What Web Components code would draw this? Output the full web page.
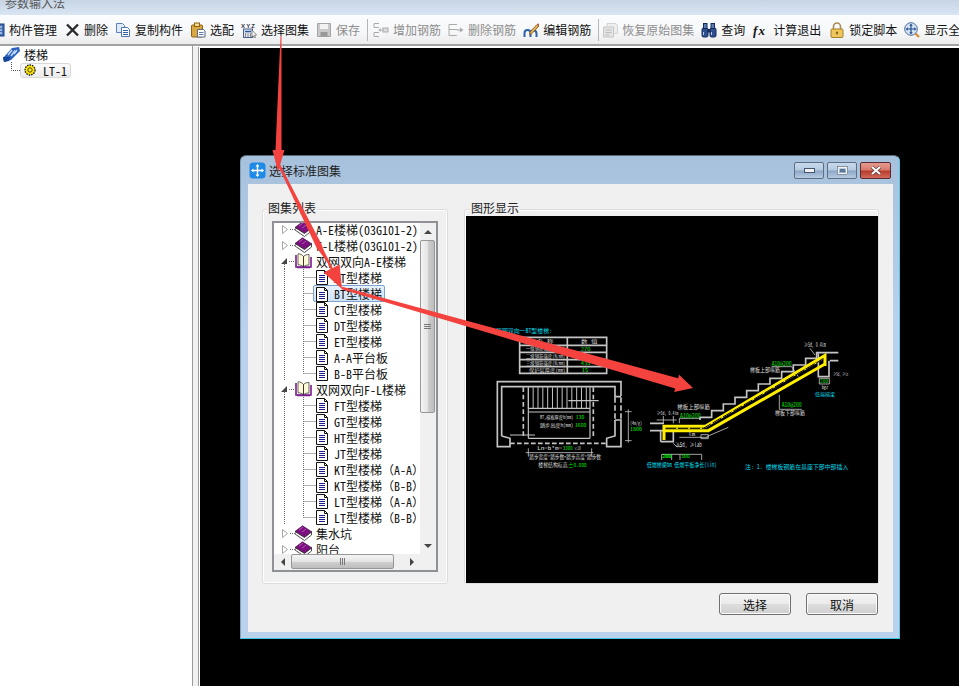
<!DOCTYPE html>
<html>
<head>
<meta charset="utf-8">
<style>
  html, body { margin: 0; height: 100%; overflow: hidden; }
  body {
    font: 12px "Noto Sans CJK SC", sans-serif;
    font-feature-settings: "hwid";
    color: #111;
  }
  .fw { font-feature-settings: normal; }
</style>
</head>
<body>
<param-app>
  <tool-bar slot="toolbar">
    <tool-item icon="manage">构件管理</tool-item>
    <tool-item icon="del">删除</tool-item>
    <tool-item icon="copy">复制构件</tool-item>
    <tool-item icon="match">选配</tool-item>
    <tool-item icon="atlas">选择图集</tool-item>
    <tool-item icon="save" disabled>保存</tool-item>
    <tool-sep></tool-sep>
    <tool-item icon="addbar" disabled>增加钢筋</tool-item>
    <tool-item icon="delbar" disabled>删除钢筋</tool-item>
    <tool-item icon="editbar">编辑钢筋</tool-item>
    <tool-sep style="margin-right:-4px"></tool-sep>
    <tool-item icon="restore" disabled>恢复原始图集</tool-item>
    <tool-item icon="query">查询</tool-item>
    <tool-item icon="fx" style="margin-left:1px">计算退出</tool-item>
    <tool-item icon="lock" style="margin-left:1px">锁定脚本</tool-item>
    <tool-item icon="zoomall">显示全</tool-item>
  </tool-bar>
  <side-tree slot="side"></side-tree>

  <atlas-dialog slot="dialog" heading="选择标准图集">
    <group-box slot="left" label="图集列表" style="--pad:11px 9px 9px 9px;--w:186px;--lx:4px">
      <tree-view>
        <tree-row kind="closed">A-E楼梯(03G101-2)</tree-row>
        <tree-row kind="closed">F-L楼梯(03G101-2)</tree-row>
        <tree-row kind="open">双网双向A-E楼梯</tree-row>
        <tree-row kind="doc">AT型楼梯</tree-row>
        <tree-row kind="doc" selected>BT型楼梯</tree-row>
        <tree-row kind="doc">CT型楼梯</tree-row>
        <tree-row kind="doc">DT型楼梯</tree-row>
        <tree-row kind="doc">ET型楼梯</tree-row>
        <tree-row kind="doc">A-A平台板</tree-row>
        <tree-row kind="doc" last>B-B平台板</tree-row>
        <tree-row kind="open">双网双向F-L楼梯</tree-row>
        <tree-row kind="doc">FT型楼梯</tree-row>
        <tree-row kind="doc">GT型楼梯</tree-row>
        <tree-row kind="doc">HT型楼梯</tree-row>
        <tree-row kind="doc">JT型楼梯</tree-row>
        <tree-row kind="doc">KT型楼梯<span class="fw">（</span>A-A<span class="fw">）</span></tree-row>
        <tree-row kind="doc">KT型楼梯<span class="fw">（</span>B-B<span class="fw">）</span></tree-row>
        <tree-row kind="doc">LT型楼梯<span class="fw">（</span>A-A<span class="fw">）</span></tree-row>
        <tree-row kind="doc" last>LT型楼梯<span class="fw">（</span>B-B<span class="fw">）</span></tree-row>
        <tree-row kind="closed">集水坑</tree-row>
        <tree-row kind="closed">阳台</tree-row>
      </tree-view>
    </group-box>
    <group-box slot="right" label="图形显示" style="--pad:6px 0 0 1px;--w:415px;--lx:5px">
      <cad-drawing></cad-drawing>
    </group-box>
    <win-button slot="buttons">选择</win-button>
    <win-button slot="buttons">取消</win-button>
  </atlas-dialog>
  <red-arrows slot="overlay"></red-arrows>
</param-app>

<script>
// 툴바 아이콘
const ICONS = {
  manage: `<rect x="2" y="2" width="13" height="12" fill="#3f6fb5" stroke="#1d3f7a"/><path d="M4 5h9M4 8h9M4 11h9" stroke="#fff"/>`,
  del: `<path d="M3 2.500 L14 13.500 M14 2.500 L3 13.500" stroke="#2a2a2a" stroke-width="2.400"/>`,
  copy: `<path d="M1.500 1.500h6l2 2v7h-8z" fill="#dfeafa" stroke="#5c7fb5"/><path d="M6.500 5.500h6l2 2v7h-8z" fill="#fff" stroke="#4f74ad"/><path d="M8 8.500h5M8 10.500h5M8 12.500h5" stroke="#2f5fa5"/>`,
  match: `<rect x="1.500" y="3" width="11" height="12" rx="1" fill="#d9a83e" stroke="#8a6414"/><rect x="4.500" y="1" width="5" height="3.500" fill="#f3dc8d" stroke="#8a6414"/><path d="M7.500 7.500h6l1.500 1.500v6h-7.500z" fill="#fff" stroke="#5a6a85"/><path d="M9 10.500h4.500M9 12.500h4.500" stroke="#5a7ab0"/>`,
  atlas: `<text x="0" y="5.500" font-size="6" font-family="Liberation Sans" font-weight="bold" fill="#334" textLength="14">XYZ</text><rect x="2.500" y="7" width="9" height="8.500" fill="#dfe6f2" stroke="#4a5f88"/><path d="M4 9.500h6" stroke="#2c5aa0" stroke-width="1.500"/><path d="M4 12h1M6.500 12h1M9 12h1M4 14h1M6.500 14h1M9 14h1" stroke="#333"/><path d="M11 8l4.500 5-2 .3 1 2.200-1.200.4-1-2.200-1.300 1.300z" fill="#fff" stroke="#555" stroke-width=".7"/>`,
  save: `<path d="M1.500 1.500h13v13h-13z" fill="#c9c9c9" stroke="#a5a5a5"/><rect x="4" y="2" width="8" height="5" fill="#f2f2f2"/><rect x="4.500" y="10" width="7" height="4.500" fill="#989898"/>`,
  addbar: `<path d="M1 1.500h5M1 1.500v4M1 5.500h5M1 10.500h5M1 10.500v4M1 14.500h5" stroke="#aaa" fill="none"/><path d="M6 8h4" stroke="#aaa"/><rect x="10" y="6" width="5" height="4" fill="#ddd" stroke="#aaa"/><path d="M8 6l-3 2 3 2" fill="#bbb"/>`,
  delbar: `<path d="M1 2.500h8M1 2.500v11M1 7.500h8M1 13.500h8" stroke="#aaa" fill="none"/><path d="M9 8h5" stroke="#999"/><path d="M12 5.500l3.500 2.500-3.500 2.500" fill="#aaa"/>`,
  editbar: `<path d="M1.500 15v-4a3 3 0 0 1 6 0v4M7.500 15v-3.500a3 3 0 0 1 6 0V15" fill="none" stroke="#2f62ad" stroke-width="2"/><path d="M7 10L14 2.500l2 1.500-7 7.500-2.500 1z" fill="#e8b04a" stroke="#7a5320" stroke-width=".8"/><path d="M14 2.500l2 1.500 .8-1-2-1.700z" fill="#d0453a"/>`,
  restore: `<path d="M5 1.500h9l1.500 2v8H5z" fill="#eee" stroke="#d2d2d2"/><path d="M1.500 5h10v10h-10z" fill="#e4e4e4" stroke="#c6c6c6"/><path d="M3.500 8h6M3.500 10.500h6M3.500 13h4" stroke="#bdbdbd"/>`,
  query: `<rect x="1" y="6" width="6" height="9" rx="1.500" fill="#2f4f8f" stroke="#142c5c"/><rect x="9" y="6" width="6" height="9" rx="1.500" fill="#2f4f8f" stroke="#142c5c"/><rect x="2.500" y="1.500" width="3.500" height="5" fill="#5c7ab5" stroke="#142c5c"/><rect x="10" y="1.500" width="3.500" height="5" fill="#5c7ab5" stroke="#142c5c"/><rect x="6.500" y="7" width="3" height="3.500" fill="#142c5c"/><path d="M2.500 10v3M10.500 10v3" stroke="#b9c9e8"/>`,
  fx: `<text x="0" y="13" font-size="13" font-family="Liberation Serif" font-style="italic" font-weight="bold" fill="#111" textLength="12">fx</text>`,
  lock: `<path d="M4.500 7V4.500a3.500 3.500 0 0 1 7 0V7" fill="none" stroke="#a98b52" stroke-width="1.600"/><rect x="2" y="7" width="12" height="8.500" rx="1" fill="#f0c75a" stroke="#a5802c"/><path d="M8 9.500v3M6.800 11h2.400" stroke="#6b4f14"/>`,
  zoomall: `<circle cx="7" cy="7" r="6.300" fill="#d6e3f5" stroke="#4a6a9a"/><path d="M7 2.500v9M2.500 7h9" stroke="#24508f" stroke-width="1.200"/><path d="M7 1.800l-1.800 2h3.600zM7 12.200l-1.800-2h3.600zM1.800 7l2-1.800v3.600zM12.200 7l-2-1.800v3.600z" fill="#24508f"/><path d="M11.500 11.500l3.500 3.500" stroke="#d98a2a" stroke-width="2.200"/>`,
};

// 전체 창: 제목, 툴바, 왼쪽 트리, 검은 캔버스
class ParamApp extends HTMLElement {
  constructor() {
    super();
    this.attachShadow({ mode: 'open' }).innerHTML = `
<style>
  :host { display: grid; position: relative; width: 959px; height: 686px; overflow: hidden;
    grid-template-rows: 15px 32px 1fr; background: #f0f0f0; }
  .title { background: linear-gradient(#c6d4e4, #d9e5f3); padding-left: 5px; line-height: 6px; color: #555; overflow: hidden; }
  .body { display: grid; grid-template-columns: 193px 1fr; min-height: 0; }
  .canvas { margin-left: 6px; background: #000; border: 1px solid #fff; border-width: 1px 0 0 1px; box-shadow: -1px 0 0 #9c9c9c; }
</style>
<div class="title">参数输入法</div>
<slot name="toolbar"></slot>
<div class="body">
  <slot name="side"></slot>
  <div class="canvas"></div>
</div>
<slot name="dialog"></slot>
<slot name="overlay"></slot>`;
  }
}

class ToolBar extends HTMLElement {
  constructor() {
    super();
    this.attachShadow({ mode: 'open' }).innerHTML = `
<style>
  :host { display: flex; align-items: center; gap: 7px; margin-bottom: 1px; overflow: hidden; height: 29px;
    background: linear-gradient(#fbfcfe, #f7f8fa 55%, #ececec); border-bottom: 2px solid #a2a2a2; box-shadow: 0 1px 0 #fff; }
  ::slotted(tool-item:first-child) { margin-left: -11px; }
</style>
<slot></slot>`;
  }
}

class ToolItem extends HTMLElement {
  constructor() {
    super();
    const icon = this.getAttribute('icon');
    this.attachShadow({ mode: 'open' }).innerHTML = `
<style>
  :host { display: flex; flex: none; align-items: center; gap: 4px; color: #111; white-space: nowrap; }
  :host([disabled]) { color: #8d8d8d; }
  svg { width: 16px; height: 16px; flex: none; }
</style>
<svg viewBox="0 0 16 16">${ICONS[icon] || ''}</svg><slot></slot>`;
  }
}

class ToolSep extends HTMLElement {
  constructor() {
    super();
    this.attachShadow({ mode: 'open' }).innerHTML = `
<style>:host { display: block; flex: none; width: 1px; height: 22px; margin-right: -2px; background: #b5b5b5; }</style>`;
  }
}

// 왼쪽 구조 트리
class SideTree extends HTMLElement {
  constructor() {
    super();
    this.attachShadow({ mode: 'open' }).innerHTML = `
<style>
  :host { display: block; background: #fff; border-right: 1px solid #9a9a9a; padding-top: 0; margin-top: -1px; }
  .row { display: flex; align-items: center; height: 16px; }
  .row svg { flex: none; }
  .top { padding-left: 3px; gap: 4px; }
  .sub { position: relative; padding-left: 20px; }
  .sub svg.guide { position: absolute; left: 0; top: 0; }
  .chip { display: flex; align-items: center; gap: 7px; height: 15px; width: 51px; padding-left: 3px; box-sizing: border-box;
    border: 1px solid #d9d9d9; border-radius: 3px; background: linear-gradient(#fafafa, #ececec); }
</style>
<div class="row top">
  <svg width="17" height="16" viewBox="0 0 17 16">
    <path d="M0 12 L9 2 L16 1 L17 5 L8 14 L1 16z" fill="#2a62bd"/>
    <path d="M5 9l4-5M8 10l4-5.500M11 8l3-4" stroke="#bcd6f8" stroke-width="1.600"/>
    <path d="M0 11h7l-1 4-5 1z" fill="#17479a"/>
  </svg>
  <span>楼梯</span>
</div>
<div class="row sub">
  <svg class="guide" width="20" height="16"><path d="M11.500 0v8.500H20" fill="none" stroke="#555" stroke-dasharray="1 1"/></svg>
  <div class="chip">
    <svg width="12" height="12" viewBox="0 0 12 12">
      <circle cx="6" cy="6" r="5" fill="#ffe800" stroke="#111" stroke-width="1.300" stroke-dasharray="1.500 1"/>
      <circle cx="6" cy="6" r="2.200" fill="#fff200" stroke="#4a3d00"/>
    </svg>
    <span>LT-1</span>
  </div>
</div>`;
  }
}

// 떠 있는 대화상자
class AtlasDialog extends HTMLElement {
  constructor() {
    super();
    const heading = this.getAttribute('heading');
    this.attachShadow({ mode: 'open' }).innerHTML = `
<style>
  :host { position: absolute; left: 240px; top: 155px; width: 660px; height: 484px; box-sizing: border-box;
    display: flex; flex-direction: column; padding: 0 6px 6px 7px; border-radius: 6px 6px 0 0;
    background: linear-gradient(#a7c1dc, #b9d1ea 35%); border: 1px solid #5d6b78; border-color: #5d6b78 #58c6e6 #3fc4e2 #7fa0bf; }
  .bar { display: flex; align-items: center; height: 28px; flex: none; }
  .app { width: 17px; height: 17px; margin-left: 1px; flex: none; }
  .cap { margin-left: 3px; color: #222; flex: 1; }
  .caps { display: flex; gap: 3px; margin-right: 2px; }
  .cap-btn { width: 30px; height: 17px; box-sizing: border-box; border: 1px solid #5e6f85; border-radius: 2px;
    display: flex; align-items: center; justify-content: center;
    background: linear-gradient(#c8d9ec, #b4c9e0 48%, #8aa6c6 52%, #b5cbe2); }
  .cap-btn.close { width: 31px; background: linear-gradient(#e49a90, #d97a6c 48%, #b8392a 52%, #d0695a); border-color: #5a2a30; }
  .content { flex: 1; background: #f0f0f0; display: flex; flex-direction: column; padding: 25px 13px 0 14px; min-height: 0; }
  .groups { display: flex; gap: 16px; height: 375px; flex: none; }
  .buttons { display: flex; justify-content: flex-end; gap: 15px; margin-top: 9px; padding-right: 2px; }
</style>
<div class="bar">
  <svg class="app" viewBox="0 0 17 17">
    <rect x=".5" y=".5" width="16" height="16" rx="3.500" fill="#1c8ae6"/>
    <path d="M8.500 3v11M3 8.500h11" stroke="#fff" stroke-width="1.400"/>
    <path d="M8.500 2l-2 2.500h4zM8.500 15l-2-2.500h4zM2 8.500l2.500-2v4zM15 8.500l-2.500-2v4z" fill="#fff"/>
  </svg>
  <span class="cap">${heading}</span>
  <div class="caps">
    <div class="cap-btn"><svg width="11" height="5"><rect x=".5" y=".5" width="10" height="4" fill="#f2f2f2" stroke="#45566c"/></svg></div>
    <div class="cap-btn"><svg width="11" height="9"><rect x="1" y="1" width="9" height="7" fill="none" stroke="#f2f2f2" stroke-width="2"/><rect x=".5" y=".5" width="10" height="8" fill="none" stroke="#45566c" stroke-width=".6"/><rect x="3" y="3" width="5" height="3" fill="#5d7696"/></svg></div>
    <div class="cap-btn close"><svg width="12" height="9"><path d="M2 1l8 7M10 1l-8 7" stroke="#4a3a3a" stroke-width="3.200"/><path d="M2 1l8 7M10 1l-8 7" stroke="#fff" stroke-width="2"/></svg></div>
  </div>
</div>
<div class="content">
  <div class="groups"><slot name="left"></slot><slot name="right"></slot></div>
  <div class="buttons"><slot name="buttons"></slot></div>
</div>`;
  }
}

class GroupBox extends HTMLElement {
  constructor() {
    super();
    const label = this.getAttribute('label');
    this.attachShadow({ mode: 'open' }).innerHTML = `
<style>
  :host { display: block; position: relative; box-sizing: border-box; height: 375px; width: var(--w); padding: var(--pad);
    border: 1px solid #dcdcdc; border-radius: 3px; box-shadow: inset 0 0 0 1px #fff; }
  .legend { position: absolute; left: var(--lx); top: -10px; line-height: 16px; padding: 0 1px; background: #f0f0f0; color: #222; }
</style>
<span class="legend">${label}</span>
<slot></slot>`;
  }
}

class TreeView extends HTMLElement {
  constructor() {
    super();
    this.attachShadow({ mode: 'open' }).innerHTML = `
<style>
  :host { display: grid; grid-template-columns: 1fr 16px; grid-template-rows: 1fr 16px; height: 351px; box-sizing: border-box;
    border: 2px solid #8e9297; background: #fff; }
  .view { overflow: hidden; min-height: 0; }
  .rows { margin-top: -2px; }
  .corner { background: #f0f0f0; }
</style>
<div class="view"><div class="rows"><slot></slot></div></div>
<scroll-bar orient="v" size="173"></scroll-bar>
<scroll-bar orient="h" size="103"></scroll-bar>
<div class="corner"></div>`;
  }
}

class ScrollBar extends HTMLElement {
  constructor() {
    super();
    const v = this.getAttribute('orient') === 'v';
    const size = this.getAttribute('size');
    const arrows = v ? ['M1 7l4-4 4 4z', 'M1 3l4 4 4-4z'] : ['M7 1l-4 4 4 4z', 'M3 1l4 4-4 4z'];
    const grip = v ? 'M3 0h7M3 2h7M3 4h7' : 'M0 3v7M2 3v7M4 3v7';
    this.attachShadow({ mode: 'open' }).innerHTML = `
<style>
  :host { display: flex; flex-direction: ${v ? 'column' : 'row'}; background: #f0f0f0; justify-content: space-between; }
  .arrow { flex: none; width: ${v ? '100%' : '17px'}; height: ${v ? '17px' : '100%'}; display: flex; align-items: center; justify-content: center; }
  .thumb { flex: none; box-sizing: border-box; ${v ? `height:${size}px;width:15px` : `width:${size}px;height:15px`};
    border: 1px solid #979797; border-radius: 2px; display: flex; align-items: center; justify-content: center;
    background: linear-gradient(${v ? 'to right,' : ''} #f4f4f4, #e4e4e4 50%, #cfcfcf 52%, #bdbdbd); }
  .fill { flex: 1; }
</style>
<div class="arrow"><svg width="10" height="10"><path d="${arrows[0]}" fill="#444"/></svg></div>
<div class="thumb"><svg width="${v ? 13 : 5}" height="${v ? 5 : 13}"><path d="${grip}" stroke="#777" transform="translate(${v ? 0 : .5} ${v ? .5 : 0})"/></svg></div>
<div class="fill"></div>
<div class="arrow"><svg width="10" height="10"><path d="${arrows[1]}" fill="#444"/></svg></div>`;
  }
}

// 트리의 한 줄 (closed / open / doc)
class TreeRow extends HTMLElement {
  constructor() {
    super();
    const kind = this.getAttribute('kind');
    const isDoc = kind === 'doc';
    const last = this.hasAttribute('last');
    let guide;
    if (isDoc) {
      guide = `<svg class="g" width="42" height="16">
        <path d="M10.500 0v16M29.500 0v${last ? 8.5 : 16}M29.500 8.500H42" fill="none" stroke="#666" stroke-dasharray="1 1"/></svg>`;
    } else if (kind === 'open') {
      guide = `<svg class="g" width="21" height="16">
        <path d="M10.500 11v5M15 8.500h6" fill="none" stroke="#666" stroke-dasharray="1 1"/>
        <path d="M13 5v6H7z" fill="#444"/></svg>`;
    } else {
      guide = `<svg class="g" width="21" height="16">
        <path d="M16 8.500h5" fill="none" stroke="#666" stroke-dasharray="1 1"/>
        <path d="M8.500 4.500v8l5-4z" fill="#fff" stroke="#a6a6a6"/></svg>`;
    }
    const icons = {
      doc: `<svg width="12" height="16" viewBox="0 0 12 16">
        <path d="M.5 1.500h8l3 3v11H.5z" fill="#fff" stroke="#111"/><path d="M8.500 1.500v3h3" fill="none" stroke="#111"/>
        <path d="M3 6.500h6M3 8.500h6M3 10.500h6M3 12.500h6" stroke="#1c1c8c"/></svg>`,
      closed: `<svg width="17" height="16" viewBox="0 0 17 16">
        <path d="M0 6.500L7.500 .8 17 7l-7.500 5.500z" fill="#7d1080" stroke="#3d0a3d" stroke-width=".7"/>
        <path d="M0 6.500v2.500l9.500 6.500 7-5.500V7l-7 5.500z" fill="#fff" stroke="#222" stroke-width=".8"/>
        <path d="M4 5l4-3M7 7l4-3" stroke="#b455b6"/></svg>`,
      open: `<svg width="17" height="16" viewBox="0 0 17 16">
        <path d="M1 2v12h15V4" fill="#fff" stroke="#7a1a8a" stroke-width="1.600"/>
        <path d="M8.500 3.500C7 1.500 5 .8 3 .8v11c2 0 4 .6 5.500 2zM8.500 3.500C10 1.800 12 1.500 14 1.500V12c-2 0-4 .4-5.500 1.800z" fill="#fffbd8" stroke="#222" stroke-width=".7"/>
        <path d="M2 14.500h13" stroke="#7a1a8a" stroke-width="1.500"/></svg>`,
    };
    this.attachShadow({ mode: 'open' }).innerHTML = `
<style>
  :host { display: flex; height: 16px; align-items: stretch; white-space: nowrap; color: #111; }
  .g { flex: none; }
  .item { display: flex; align-items: center; gap: ${isDoc ? 6 : 4}px; }
  :host([selected]) .item { margin: 0 0 0 -3px; padding: 0 2px; height: 15px; border: 1px solid #7da2ce; border-radius: 2px;
    background: linear-gradient(#e6f1fd, #cfe3fb); }
</style>
${guide}<div class="item">${icons[kind]}<span><slot></slot></span></div>`;
  }
}

class WinButton extends HTMLElement {
  constructor() {
    super();
    this.attachShadow({ mode: 'open' }).innerHTML = `
<style>
  :host { display: flex; align-items: center; justify-content: center; box-sizing: border-box; width: 72px; height: 22px;
    border: 1px solid #707070; border-radius: 3px; color: #111;
    background: linear-gradient(#f3f3f3, #ebebeb 48%, #dddddd 52%, #cfcfcf); box-shadow: inset 0 0 0 1px #fafafa; }
</style>
<slot></slot>`;
  }
}

// 도면 미리보기
class CadDrawing extends HTMLElement {
  constructor() {
    super();
    const t = (x, y, len, color, str, size = 18) =>
      `<text x="${x}" y="${y}" fill="${color}" font-size="${size}" textLength="${len}" lengthAdjust="spacingAndGlyphs">${str}</text>`;
    const W = '#d8d8d8', G = '#00e000', C = '#00d8e8';
    const stairLines = [];
    for (let x = 145; x <= 330; x += 14.5) stairLines.push(`M${x} 232V295`);
    const steps = [[215, 212], [250, 192], [285, 172], [320, 152], [355, 132], [390, 115], [425, 95], [460, 75], [497, 55]];
    let stepPath = 'M180 240V232H215';
    steps.forEach((s, i) => {
      const next = steps[i + 1] || [530, 38];
      stepPath += `V${s[1]}H${next[0]}`;
    });
    stepPath += 'V38H595';
    this.attachShadow({ mode: 'open' }).innerHTML = `
<style>
  :host { display: block; height: 367px; background: #000; }
  svg { display: block; font-family: "Noto Sans CJK SC", sans-serif; }
</style>
<svg width="412" height="367" viewBox="466 216 412 367">
  <g transform="translate(480 310) scale(.3333)" fill="none" stroke="#c4c4c4" stroke-width="5">
    <path d="M119 82H380V190H119zM119 106H380M119 127H380M119 149H380M119 170H380M262 82V190"/>
    <path d="M52 258V215H423V258M65 378V230H405V260H423M405 330H423V410H380V385L405 378V330M52 258V410H90V385L65 378"/>
    <path d="M405 262V330M423 262V330" stroke-dasharray="16 8"/>
    <path d="M90 400H380" stroke-dasharray="14 7"/>
    <path d="M130 232V385M340 232V385" stroke-dasharray="14 8"/>
    <path d="M145 232V385M330 232V385M145 385H330" stroke-width="3.500"/>
    <path d="${stairLines.join('')}" stroke-width="3"/>
    <path d="M145 295H330M145 306H330M265 272H356M90 375H165" stroke-width="3.500"/>
    <path d="M445 298V398M435 305H455M435 392H455M137 428H340M145 415V440M335 415V440" stroke-width="2.500"/>
    <g stroke="none">
      ${t(48, 68, 168, C, '双网双向一BT型楼梯:')}
      ${t(170, 99, 50, W, '名 称', 15)}${t(303, 99, 50, W, '数 值', 15)}
      ${t(138, 120, 118, W, '一级钢筋强度(N/mm)', 14)}${t(302, 122, 30, G, '270', 14)}
      ${t(138, 143, 118, W, '二级钢筋强度(N/mm)', 14)}${t(302, 144, 30, G, '360', 14)}
      ${t(138, 165, 118, W, '三级钢筋强度(N/mm)', 14)}${t(302, 165, 30, G, '435', 14)}
      ${t(147, 186, 110, W, '保护层厚度(mm)', 14)}${t(305, 186, 20, G, '15', 14)}
      ${t(180, 327, 100, W, 'BT,梯板厚度h(mm)', 15)}${t(287, 327, 26, G, '130', 15)}
      ${t(180, 351, 100, W, '踏步高度h(mm)', 15)}${t(285, 351, 34, G, '1600', 15)}
      ${t(172, 420, 74, W, 'Ln=b*m=', 15)}${t(248, 420, 30, G, '3300', 15)}${t(282, 420, 20, W, '×10', 15)}
      ${t(148, 447, 215, W, '踏步宽度*踏步数=踏步高度*踏步数', 16)}
      ${t(175, 472, 88, W, '楼梯结构标高', 16)}${t(265, 472, 55, G, '±0.000', 16)}
      ${t(450, 345, 36, W, '(4m/g)', 15)}${t(450, 362, 36, G, '1800', 15)}
      ${t(545, 445, 30, G, '200', 15)}
    </g>
  </g>
  <g transform="translate(640 340) scale(.3333)" fill="none" stroke="#c4c4c4" stroke-width="5">
    <path d="${stepPath}"/>
    <path d="M30 250H72M30 272H72M62 305H100V270M62 305V272M535 40V110H567V62M570 62H595"/>
    <path d="M200 290L265 262M118 292H205M183 284H205V296H183zM65 343H185M65 343V360M95 343V360M120 343V360M185 343V360M50 240H110M70 228V250M100 228V250" stroke-width="2.500"/>
    <path d="M118 250V235H182M395 80H455L475 110M418 165V208H485M538 115H568V132H538zM510 25L525 45M100 310L110 320H125" stroke-width="2.500"/>
    <g stroke="#ffee00" stroke-width="9">
      <path d="M72 300V259H196L555 46V78"/>
      <path d="M72 272H205L555 72" />
    </g>
    <path d="M78 265H190L548 58" stroke="#ffee00" stroke-width="3"/>
    <path d="M78 265H190L548 58" stroke="#000" stroke-width="3" stroke-dasharray="30 6"/>
    <g stroke="none">
      ${t(492, 22, 65, W, '≥5d, 0.4lm')}
      ${t(395, 78, 60, G, 'A10@200')}
      ${t(330, 97, 90, W, '梯板上部纵筋')}
      ${t(580, 108, 45, W, '≥5d, ≥lc', 15)}
      ${t(540, 130, 25, G, '200', 14)}
      ${t(545, 148, 20, W, 'bgz', 13)}
      ${t(525, 169, 60, C, '低端梯梁', 15)}
      ${t(425, 202, 60, G, 'A10@200')}
      ${t(405, 226, 90, W, '梯板下部纵筋')}
      ${t(112, 208, 98, W, '梯板上部纵筋')}
      ${t(120, 234, 62, G, 'A10@200')}
      ${t(50, 226, 65, W, '≥5d, 0.4lm', 15)}
      ${t(105, 322, 80, W, '≥5d, ≥lab')}
      ${t(145, 288, 20, W, 'lm', 15)}
      ${t(70, 355, 25, G, '200', 15)}${t(122, 355, 28, G, '300', 15)}
      ${t(20, 381, 210, C, '低端梯梁bm 低端平板净长(lin)')}
      ${t(315, 387, 310, C, '注: 1. 楼梯板钢筋在基座下部中部插入')}
    </g>
  </g>
</svg>`;
  }
}

// 주석용 빨간 화살표
class RedArrows extends HTMLElement {
  constructor() {
    super();
    const arrow = (x0, y0, x1, y1, w0, w1, headLen, wing) => {
      const len = Math.hypot(x1 - x0, y1 - y0);
      const dx = (x1 - x0) / len, dy = (y1 - y0) / len;
      const nx = -dy, ny = dx;
      const bx = x1 - dx * headLen, by = y1 - dy * headLen;
      const p = (x, y, d) => `${(x + nx * d).toFixed(1)},${(y + ny * d).toFixed(1)}`;
      return `<polygon points="${[
        p(x0, y0, w0 / 2), p(bx, by, w1 / 2), p(bx, by, wing), `${x1},${y1}`,
        p(bx, by, -wing), p(bx, by, -w1 / 2), p(x0, y0, -w0 / 2),
      ].join(' ')}"/>`;
    };
    this.attachShadow({ mode: 'open' }).innerHTML = `
<style>:host { position: absolute; left: 0; top: 0; width: 959px; height: 686px; pointer-events: none; }</style>
<svg width="959" height="686" fill="#f4433f">
  ${arrow(281, 36, 278, 172, 1, 6, 22, 6)}
  ${arrow(279, 165, 342, 289, 2, 2.5, 23, 9)}
  ${arrow(279, 165, 327, 262, 2, 6, 18, 3)}
  ${arrow(342, 288, 693, 388, 2.5, 10.5, 17, 9)}
</svg>`;
  }
}

customElements.define('param-app', ParamApp);
customElements.define('tool-bar', ToolBar);
customElements.define('tool-item', ToolItem);
customElements.define('tool-sep', ToolSep);
customElements.define('side-tree', SideTree);
customElements.define('atlas-dialog', AtlasDialog);
customElements.define('group-box', GroupBox);
customElements.define('tree-view', TreeView);
customElements.define('scroll-bar', ScrollBar);
customElements.define('tree-row', TreeRow);
customElements.define('win-button', WinButton);
customElements.define('cad-drawing', CadDrawing);
customElements.define('red-arrows', RedArrows);
</script>
</body>
</html>
